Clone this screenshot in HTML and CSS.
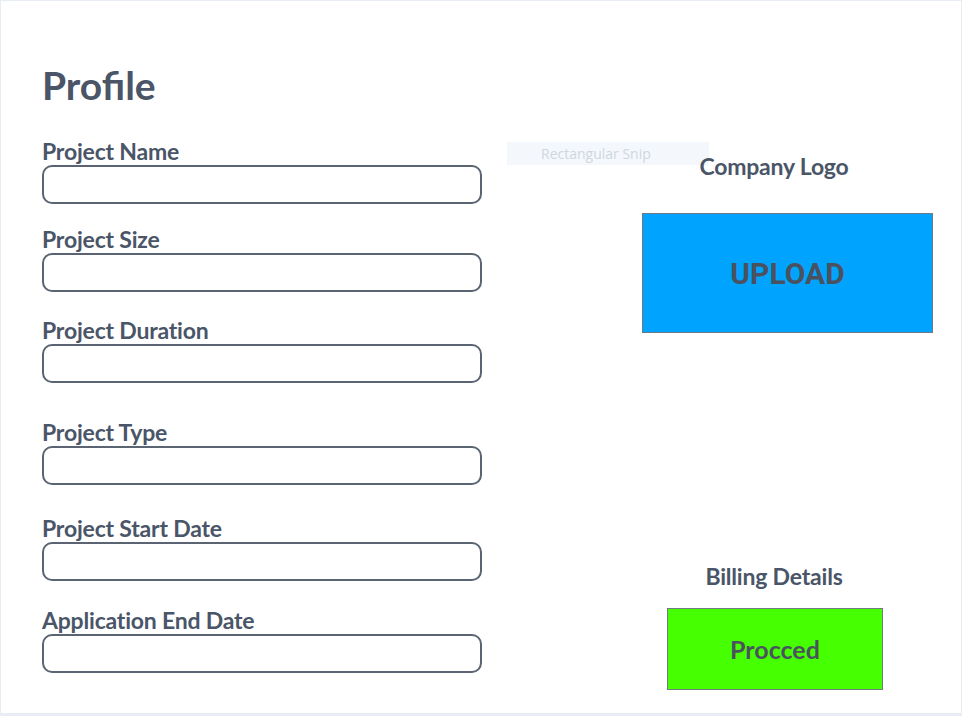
FILE: index.html
```html
<!DOCTYPE html>
<html>
<head>
<meta charset="utf-8">
<link rel="stylesheet" href="styles.css">
</head>
<body>
<div class="card">
  <div class="left">
    <h1 class="title">Profile</h1>
    <div class="fields">
      <div class="field"><label class="label">Project Name</label><div class="input"></div></div>
      <div class="field"><label class="label">Project Size</label><div class="input"></div></div>
      <div class="field"><label class="label">Project Duration</label><div class="input"></div></div>
      <div class="field"><label class="label">Project Type</label><div class="input"></div></div>
      <div class="field"><label class="label">Project Start Date</label><div class="input"></div></div>
      <div class="field"><label class="label">Application End Date</label><div class="input"></div></div>
    </div>
  </div>
  <div class="right">
    <div class="snip">Rectangular Snip</div>
    <div class="section-title logo-title">Company Logo</div>
    <div class="upload-wrap"><div class="upload">UPLOAD</div></div>
    <div class="section-title billing-title">Billing Details</div>
    <div class="proceed-wrap"><div class="proceed">Procced</div></div>
  </div>
</div>
</body>
</html>
```
FILE: styles.css
```css
html, body {
  margin: 0;
  padding: 0;
}
body {
  background: #e8edf3;
  width: 962px;
  height: 716px;
  overflow: hidden;
  font-family: Lato, "Liberation Sans", sans-serif;
  color: #4a5568;
}
.card {
  margin: 1px 1px 0 1px;
  height: 712px;
  background: #ffffff;
  display: flex;
  box-sizing: border-box;
  padding-left: 41px;
}
.left {
  width: 440px;
  flex-shrink: 0;
  display: flex;
  flex-direction: column;
}
.title {
  margin: 61px 0 0 0;
  font-size: 39px;
  line-height: 46px;
  font-weight: 700;
}
.fields {
  display: flex;
  flex-direction: column;
  margin-top: 33px;
}
.field {
  display: flex;
  flex-direction: column;
}
.field:nth-child(2) { margin-top: 25px; }
.field:nth-child(3) { margin-top: 28px; }
.field:nth-child(4) { margin-top: 39px; }
.field:nth-child(5) { margin-top: 33px; }
.field:nth-child(6) { margin-top: 29px; }
.label {
  font-size: 23px;
  font-weight: 700;
  line-height: 20px;
  height: 24px;
  letter-spacing: -0.2px;
}
.input {
  height: 39px;
  border: 2px solid #5a6472;
  border-radius: 10px;
  box-sizing: border-box;
  background: #fff;
}
.right {
  flex: 1;
  display: flex;
  flex-direction: column;
  position: relative;
}
.snip {
  position: absolute;
  left: 25px;
  top: 141px;
  width: 202px;
  height: 23px;
  background: #f4f8fc;
  color: #cfd6de;
  font-family: "Open Sans", "Noto Sans", sans-serif;
  font-size: 14px;
  line-height: 23px;
  box-sizing: border-box;
  padding-left: 34px;
}
.section-title {
  position: relative;
  font-size: 23px;
  font-weight: 700;
  line-height: 24px;
  text-align: center;
  margin-left: 181px;
  width: 222px;
  letter-spacing: -0.2px;
}
.logo-title {
  margin-top: 153px;
}
.upload-wrap {
  margin-top: 35px;
  padding-left: 160px;
}
.upload {
  width: 291px;
  height: 120px;
  box-sizing: border-box;
  background: #00a4ff;
  border: 1px solid #6c7a88;
  display: flex;
  align-items: center;
  justify-content: center;
  font-family: Roboto, "Liberation Sans", sans-serif;
  font-weight: 700;
  font-size: 30px;
  color: #4a5260;
}
.billing-title {
  margin-top: 231px;
}
.proceed-wrap {
  margin-top: 20px;
  padding-left: 185px;
}
.proceed {
  width: 216px;
  height: 82px;
  box-sizing: border-box;
  background: #46ff00;
  border: 1px solid #707a80;
  display: flex;
  align-items: center;
  justify-content: center;
  font-weight: 700;
  font-size: 25px;
  color: #4a5260;
}
```
